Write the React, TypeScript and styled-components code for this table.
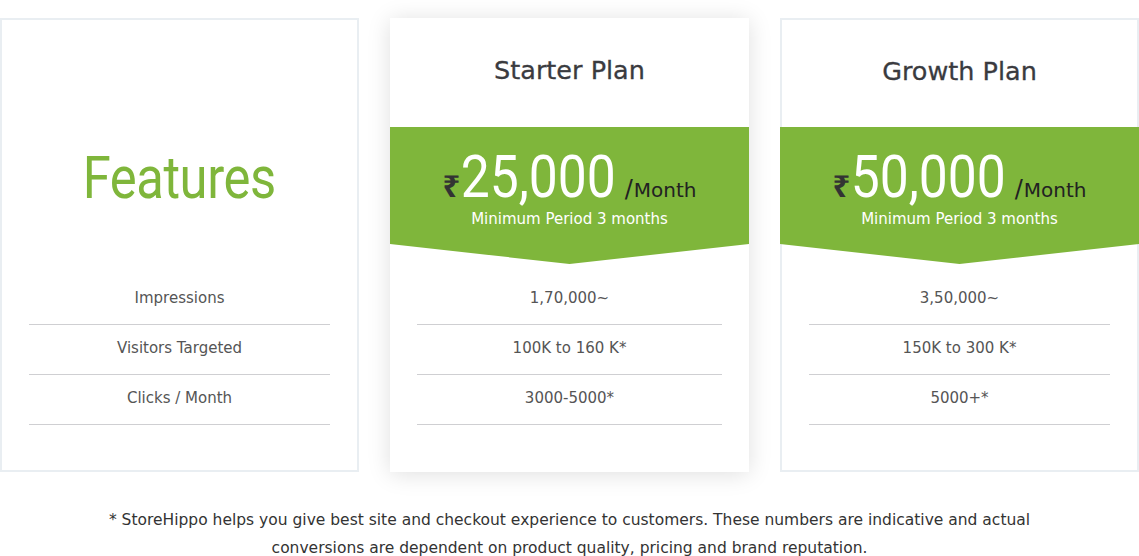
import * as React from 'react';
import styled, { createGlobalStyle } from 'styled-components';

const GlobalStyle = createGlobalStyle`
  body {
    margin: 0;
    background: #fff;
    font-family: "DejaVu Sans", "Open Sans", sans-serif;
    color: #333;
  }
`;

const GREEN = '#7fb63b';

const Page = styled.div`
  width: 1139px;
  padding-top: 18px;
`;

const Cards = styled.div`
  display: grid;
  grid-template-columns: repeat(3, 359px);
  column-gap: 31px;
`;

const Card = styled.section<{ $featured?: boolean }>`
  height: 454px;
  box-sizing: border-box;
  background: #fff;
  border: ${p => (p.$featured ? 'none' : '2px solid #e9eef2')};
  box-shadow: ${p => (p.$featured ? '0 2px 22px rgba(0,0,0,0.13)' : 'none')};
  display: flex;
  flex-direction: column;
`;

const FeatureHead = styled.div`
  height: 244px;
  box-sizing: border-box;
  padding-top: 70px;
  display: flex;
  align-items: center;
  justify-content: center;
`;

const FeatureTitle = styled.h2`
  margin: 0;
  display: inline-block;
  font-family: Roboto, sans-serif;
  font-weight: 400;
  font-size: 59px;
  letter-spacing: -0.5px;
  transform: scaleX(0.86);
  color: ${GREEN};
`;

const PlanHead = styled.header<{ $bordered?: boolean }>`
  height: ${p => (p.$bordered ? '107px' : '109px')};
  box-sizing: border-box;
  padding-bottom: 6px;
  display: flex;
  align-items: center;
  justify-content: center;
`;

const PlanName = styled.h3`
  margin: 0;
  font-size: 25.5px;
  font-weight: 400;
  color: #3a3b3f;
  -webkit-text-stroke: 0.3px #3a3b3f;
`;

const Banner = styled.div<{ $bordered?: boolean }>`
  height: 137px;
  box-sizing: border-box;
  margin: ${p => (p.$bordered ? '0 -2px' : '0')};
  padding-top: 20px;
  background: ${GREEN};
  clip-path: polygon(0 0, 100% 0, 100% 117px, 50% 137px, 0 117px);
  text-align: center;
`;

const PriceLine = styled.div`
  height: 60px;
  line-height: 60px;
  white-space: nowrap;
`;

const Rupee = styled.span`
  line-height: 1;
  font-family: "Noto Sans", "DejaVu Sans", sans-serif;
  font-size: 31px;
  font-weight: 700;
  color: #333;
`;

const Amount = styled.span`
  display: inline-block;
  line-height: 60px;
  margin: 0 -12px 0 -12px;
  font-family: Roboto, sans-serif;
  font-size: 60px;
  font-weight: 400;
  transform: scaleX(0.86);
  color: #fff;
`;

const Per = styled.span`
  line-height: 1;
  margin-left: 8px;
  font-size: 20px;
  color: #222;
`;

const Slash = styled.span`
  font-size: 24px;
  margin-right: 1px;
`;

const Period = styled.div`
  margin-top: 1px;
  line-height: 22px;
  font-size: 15px;
  color: #fff;
`;

const Rows = styled.ul`
  list-style: none;
  margin: 0;
  padding: 11px 27px 0;
`;

const Row = styled.li`
  height: 49px;
  line-height: 46px;
  border-bottom: 1px solid #cfcfd2;
  text-align: center;
  font-size: 15px;
  color: #555;
`;

const Note = styled.p`
  margin: 34px 0 0;
  text-align: center;
  font-size: 15.5px;
  line-height: 28px;
  color: #333;
`;

interface Plan {
  name: string;
  amount: string;
  values: string[];
}

const plans: Plan[] = [
  { name: 'Starter Plan', amount: '25,000', values: ['1,70,000~', '100K to 160 K*', '3000-5000*'] },
  { name: 'Growth Plan', amount: '50,000', values: ['3,50,000~', '150K to 300 K*', '5000+*'] },
];

const features = ['Impressions', 'Visitors Targeted', 'Clicks / Month'];

const PlanCard = ({ plan, featured }: { plan: Plan; featured: boolean }) => (
  <Card $featured={featured}>
    <PlanHead $bordered={!featured}>
      <PlanName>{plan.name}</PlanName>
    </PlanHead>
    <Banner $bordered={!featured}>
      <PriceLine>
        <Rupee>₹</Rupee>
        <Amount>{plan.amount}</Amount>
        <Per>
          <Slash>/</Slash>Month
        </Per>
      </PriceLine>
      <Period>Minimum Period 3 months</Period>
    </Banner>
    <Rows>
      {plan.values.map(v => (
        <Row key={v}>{v}</Row>
      ))}
    </Rows>
  </Card>
);

export default function App() {
  return (
    <Page>
      <GlobalStyle />
      <Cards>
        <Card>
          <FeatureHead>
            <FeatureTitle>Features</FeatureTitle>
          </FeatureHead>
          <Rows>
            {features.map(f => (
              <Row key={f}>{f}</Row>
            ))}
          </Rows>
        </Card>
        <PlanCard plan={plans[0]} featured />
        <PlanCard plan={plans[1]} featured={false} />
      </Cards>
      <Note>
        * StoreHippo helps you give best site and checkout experience to customers. These numbers are indicative and actual
        <br />
        conversions are dependent on product quality, pricing and brand reputation.
      </Note>
    </Page>
  );
}
